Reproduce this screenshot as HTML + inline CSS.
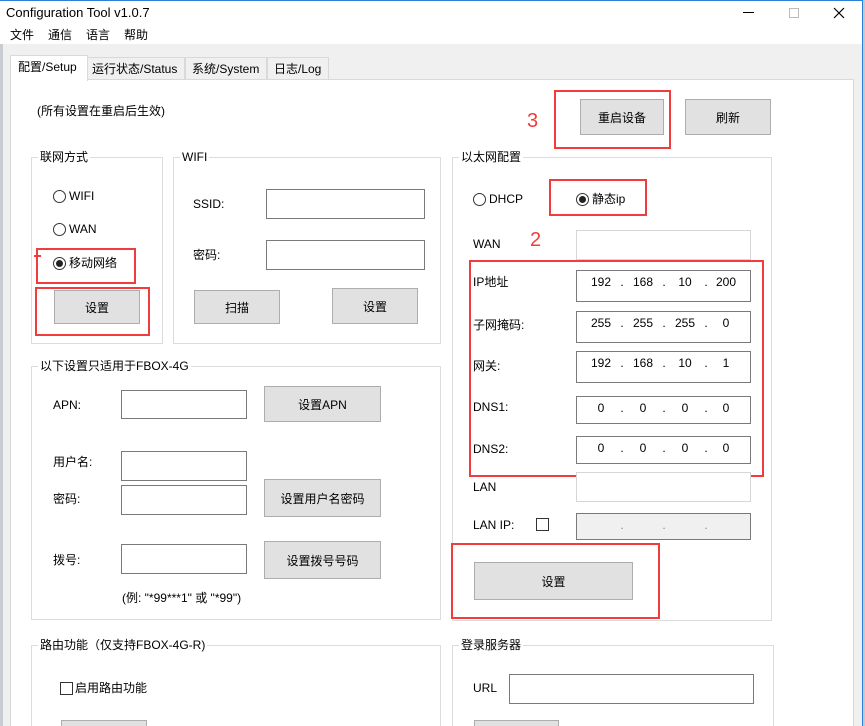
<!DOCTYPE html>
<html style="width:865px;height:726px;overflow:hidden"><head><meta charset="utf-8"><style>
*{box-sizing:border-box;margin:0;padding:0}
body{width:865px;height:726px;overflow:hidden;background:#fff;position:relative;font-family:"Liberation Sans","Noto Sans CJK SC",sans-serif;font-size:12px;color:#000}
.a{position:absolute;white-space:nowrap}
.t{position:absolute;white-space:nowrap;line-height:14px;transform:translateY(-7px)}
.btn{position:absolute;background:#e1e1e1;border:1px solid #adadad;display:flex;align-items:center;justify-content:center}
.inp{position:absolute;background:#fff;border:1px solid #7a7a7a}
.dis{position:absolute;background:#fff;border:1px solid #d6d6d6}
.grp{position:absolute;border:1px solid #dcdcdc}
.lg{position:absolute;background:#fff;padding:0 2px;line-height:14px;top:-8px;left:6px;white-space:nowrap}
.red{position:absolute;border:2px solid #f03c3c}
.rad{position:absolute;width:13px;height:13px;border:1px solid #333;border-radius:50%;background:#fff}
.rad.on::after{content:"";position:absolute;left:2px;top:2px;width:7px;height:7px;border-radius:50%;background:#222}
.chk{position:absolute;width:13px;height:13px;border:1px solid #333;background:#fff}
.ip span{position:absolute;top:4px;transform:translateX(-50%)}
</style></head><body>
<div class="a" style="left:0;top:0;width:865px;height:44px;background:#fff"></div>
<div class="a" style="left:0;top:0;width:865px;height:1px;background:#2b7fd6"></div>
<div class="t" style="left:6px;top:13px;font-size:13px">Configuration Tool v1.0.7</div>
<div class="a" style="left:743px;top:12px;width:11px;height:1px;background:#000"></div>
<div class="a" style="left:789px;top:8px;width:10px;height:10px;border:1px solid #bbb"></div>
<svg class="a" style="left:833px;top:7px" width="12" height="12"><path d="M1 1L11 11M11 1L1 11" stroke="#000" stroke-width="1.2"/></svg>
<div class="t" style="left:10px;top:35px">文件</div>
<div class="t" style="left:48px;top:35px">通信</div>
<div class="t" style="left:86px;top:35px">语言</div>
<div class="t" style="left:124px;top:35px">帮助</div>
<div class="a" style="left:3px;top:44px;width:859px;height:682px;background:#f0f0f0"></div>
<div class="a" style="left:0;top:44px;width:3px;height:682px;background:#c9ccd2"></div>
<div class="a" style="left:862px;top:0;width:1px;height:726px;background:#2b7fd6"></div>
<div class="a" style="left:863px;top:0;width:2px;height:726px;background:#c8c8c8"></div>
<div class="a" style="left:87px;top:57px;width:98px;height:23px;border:1px solid #d9d9d9;background:#f0f0f0"></div>
<div class="a" style="left:185px;top:57px;width:82px;height:23px;border:1px solid #d9d9d9;background:#f0f0f0"></div>
<div class="a" style="left:267px;top:57px;width:62px;height:23px;border:1px solid #d9d9d9;background:#f0f0f0"></div>
<div class="a" style="left:10px;top:79px;width:844px;height:647px;border:1px solid #d9d9d9;border-bottom:none;background:#fff"></div>
<div class="a" style="left:10px;top:55px;width:78px;height:26px;border:1px solid #d9d9d9;border-bottom:none;background:#fff"></div>
<div class="t" style="left:18px;top:67px">配置/Setup</div>
<div class="t" style="left:92px;top:69px">运行状态/Status</div>
<div class="t" style="left:192px;top:69px">系统/System</div>
<div class="t" style="left:274px;top:69px">日志/Log</div>
<div class="t" style="left:37px;top:111px">(所有设置在重启后生效)</div>
<div class="grp" style="left:31px;top:157px;width:132px;height:187px"><div class="lg">联网方式</div></div>
<div class="rad" style="left:53px;top:190px"></div><div class="t" style="left:69px;top:196px">WIFI</div>
<div class="rad" style="left:53px;top:223px"></div><div class="t" style="left:69px;top:229px">WAN</div>
<div class="rad on" style="left:53px;top:257px"></div><div class="t" style="left:69px;top:263px">移动网络</div>
<div class="red" style="left:36px;top:248px;width:100px;height:36px"></div>
<div class="a" style="left:34px;top:255px;width:7px;height:2px;background:#f03c3c"></div>
<div class="btn" style="left:54px;top:290px;width:86px;height:34px">设置</div>
<div class="red" style="left:35px;top:287px;width:115px;height:49px"></div>
<div class="grp" style="left:173px;top:157px;width:268px;height:187px"><div class="lg">WIFI</div></div>
<div class="t" style="left:193px;top:204px">SSID:</div>
<div class="inp" style="left:266px;top:189px;width:159px;height:30px"></div>
<div class="t" style="left:193px;top:255px">密码:</div>
<div class="inp" style="left:266px;top:240px;width:159px;height:30px"></div>
<div class="btn" style="left:194px;top:290px;width:86px;height:34px">扫描</div>
<div class="btn" style="left:332px;top:288px;width:86px;height:36px">设置</div>
<div class="btn" style="left:580px;top:99px;width:84px;height:36px">重启设备</div>
<div class="red" style="left:554px;top:90px;width:117px;height:59px"></div>
<div class="t" style="left:527px;top:121px;color:#f03c3c;font-size:20px;line-height:22px;transform:translateY(-11px)">3</div>
<div class="btn" style="left:685px;top:99px;width:86px;height:36px">刷新</div>
<div class="grp" style="left:452px;top:157px;width:320px;height:464px"><div class="lg">以太网配置</div></div>
<div class="rad" style="left:473px;top:193px"></div><div class="t" style="left:489px;top:199px">DHCP</div>
<div class="rad on" style="left:576px;top:193px"></div><div class="t" style="left:592px;top:199px">静态ip</div>
<div class="red" style="left:549px;top:179px;width:98px;height:37px"></div>
<div class="t" style="left:473px;top:244px">WAN</div>
<div class="t" style="left:530px;top:240px;color:#f03c3c;font-size:20px;line-height:22px;transform:translateY(-11px)">2</div>
<div class="dis" style="left:576px;top:230px;width:175px;height:30px"></div>
<div class="t" style="left:473px;top:282px">IP地址</div>
<div class="inp ip" style="left:576px;top:270px;width:175px;height:32px"><span style="left:24px">192</span><span style="left:45px">.</span><span style="left:66px">168</span><span style="left:87px">.</span><span style="left:108px">10</span><span style="left:129px">.</span><span style="left:149px">200</span></div>
<div class="t" style="left:473px;top:325px">子网掩码:</div>
<div class="inp ip" style="left:576px;top:311px;width:175px;height:32px"><span style="left:24px">255</span><span style="left:45px">.</span><span style="left:66px">255</span><span style="left:87px">.</span><span style="left:108px">255</span><span style="left:129px">.</span><span style="left:149px">0</span></div>
<div class="t" style="left:473px;top:366px">网关:</div>
<div class="inp ip" style="left:576px;top:351px;width:175px;height:32px"><span style="left:24px">192</span><span style="left:45px">.</span><span style="left:66px">168</span><span style="left:87px">.</span><span style="left:108px">10</span><span style="left:129px">.</span><span style="left:149px">1</span></div>
<div class="t" style="left:473px;top:407px">DNS1:</div>
<div class="inp ip" style="left:576px;top:396px;width:175px;height:28px"><span style="left:24px">0</span><span style="left:45px">.</span><span style="left:66px">0</span><span style="left:87px">.</span><span style="left:108px">0</span><span style="left:129px">.</span><span style="left:149px">0</span></div>
<div class="t" style="left:473px;top:449px">DNS2:</div>
<div class="inp ip" style="left:576px;top:436px;width:175px;height:28px"><span style="left:24px">0</span><span style="left:45px">.</span><span style="left:66px">0</span><span style="left:87px">.</span><span style="left:108px">0</span><span style="left:129px">.</span><span style="left:149px">0</span></div>
<div class="red" style="left:469px;top:260px;width:295px;height:217px"></div>
<div class="t" style="left:473px;top:487px">LAN</div>
<div class="dis" style="left:576px;top:472px;width:175px;height:30px"></div>
<div class="t" style="left:473px;top:525px">LAN IP:</div>
<div class="chk" style="left:536px;top:518px"></div>
<div class="inp ip" style="left:576px;top:513px;width:175px;height:27px;background:#f0f0f0;color:#888"><span style="left:45px">.</span><span style="left:87px">.</span><span style="left:129px">.</span></div>
<div class="btn" style="left:474px;top:562px;width:159px;height:38px">设置</div>
<div class="red" style="left:451px;top:543px;width:209px;height:76px"></div>
<div class="grp" style="left:31px;top:366px;width:410px;height:254px"><div class="lg">以下设置只适用于FBOX-4G</div></div>
<div class="t" style="left:53px;top:405px">APN:</div>
<div class="inp" style="left:121px;top:390px;width:126px;height:29px"></div>
<div class="btn" style="left:264px;top:386px;width:117px;height:36px">设置APN</div>
<div class="t" style="left:53px;top:462px">用户名:</div>
<div class="inp" style="left:121px;top:451px;width:126px;height:30px"></div>
<div class="t" style="left:53px;top:499px">密码:</div>
<div class="inp" style="left:121px;top:485px;width:126px;height:30px"></div>
<div class="btn" style="left:264px;top:479px;width:117px;height:38px">设置用户名密码</div>
<div class="t" style="left:53px;top:560px">拨号:</div>
<div class="inp" style="left:121px;top:544px;width:126px;height:30px"></div>
<div class="btn" style="left:264px;top:541px;width:117px;height:38px">设置拨号号码</div>
<div class="t" style="left:122px;top:598px">(例: "*99***1" 或 "*99")</div>
<div class="grp" style="left:31px;top:645px;width:410px;height:100px"><div class="lg">路由功能（仅支持FBOX-4G-R)</div></div>
<div class="chk" style="left:60px;top:682px"></div>
<div class="t" style="left:75px;top:688px">启用路由功能</div>
<div class="btn" style="left:61px;top:720px;width:86px;height:30px"></div>
<div class="grp" style="left:452px;top:645px;width:322px;height:100px"><div class="lg">登录服务器</div></div>
<div class="t" style="left:473px;top:688px">URL</div>
<div class="inp" style="left:509px;top:674px;width:245px;height:30px"></div>
<div class="btn" style="left:474px;top:720px;width:85px;height:30px"></div>
</body></html>
